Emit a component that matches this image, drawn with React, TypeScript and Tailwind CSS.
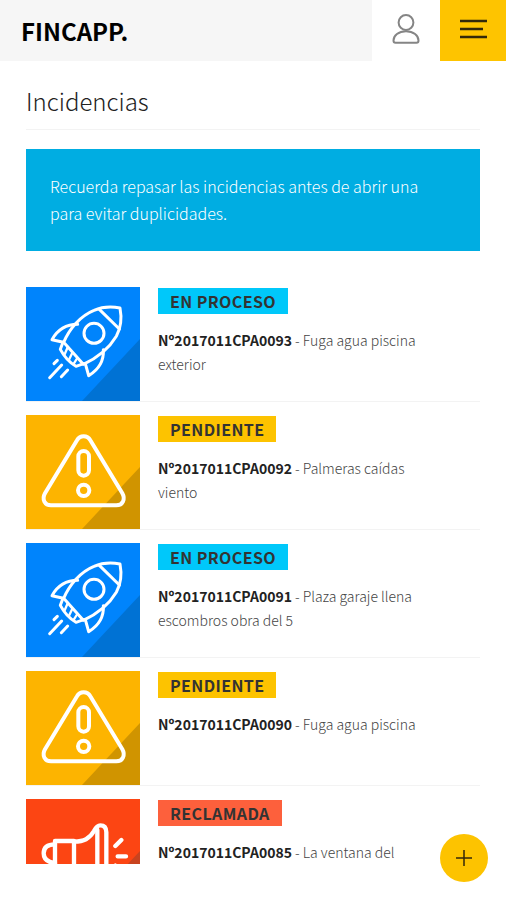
import type { ReactNode } from "react"

type Status = "proceso" | "pendiente" | "reclamada"

interface Incident {
    code: string
    text: string
    status: Status
}

const incidents: Incident[] = [
    { code: "Nº2017011CPA0093", text: "Fuga agua piscina exterior", status: "proceso" },
    { code: "Nº2017011CPA0092", text: "Palmeras caídas viento", status: "pendiente" },
    { code: "Nº2017011CPA0091", text: "Plaza garaje llena escombros obra del 5", status: "proceso" },
    { code: "Nº2017011CPA0090", text: "Fuga agua piscina", status: "pendiente" },
    { code: "Nº2017011CPA0085", text: "La ventana del", status: "reclamada" },
]

const RocketIcon = () => (
    <g strokeWidth="9">
        <path d="M131 190C148 150 180 111 222 94C245 84 275 82 300 87C306 118 301 150 289 172C268 207 230 238 190 256Z" />
        <path d="M238 91L298 150" />
        <circle cx="222" cy="163" r="30" />
        <path d="M173 136C138 136 114 150 96 182L130 190" />
        <path d="M250 212C252 246 236 272 206 290L196 254" />
        <path d="M129 190L121 211C132 232 148 250 168 262L191 254" />
        <path strokeWidth="7" d="M143 205L134 226M157 221L147 242M172 237L160 256" />
        <path d="M112 244L102 254M125 258L89 296M143 273L124 293" />
    </g>
)

const WarningIcon = () => (
    <g strokeWidth="12">
        <path d="M171 98C180 82 202 82 211 98L307 257C317 275 308 293 289 293H93C74 293 65 275 75 257Z" />
        <rect x="175" y="130" width="32" height="74" rx="16" />
        <circle cx="191" cy="248" r="17" />
    </g>
)

const MegaphoneIcon = () => (
    <g strokeWidth="13">
        <path d="M105 190C82 190 71 200 71 217C71 234 82 244 105 246" />
        <path d="M105 180H162V256H105Z" />
        <path d="M162 182C192 181 208 174 222 150C229 136 234 133 241 133C252 133 259 140 259 154V282C259 296 252 302 241 302C234 302 229 298 222 286C208 262 192 256 162 256" />
        <path d="M232 146V290" />
        <path d="M286 195L304 177M293 226H318M286 254L304 272" />
    </g>
)

const statusStyles: Record<Status, { label: string; badge: string; tile: string; corner: string; viewBox: string; icon: ReactNode }> = {
    proceso: {
        label: "EN PROCESO",
        badge: "bg-[#00c8fa]",
        tile: "bg-[#0084fc]",
        corner: "fill-[#0072d4]",
        viewBox: "18 24 342 342",
        icon: <RocketIcon />,
    },
    pendiente: {
        label: "PENDIENTE",
        badge: "bg-[#fdc300]",
        tile: "bg-[#fdb400]",
        corner: "fill-[#d09400]",
        viewBox: "18 22 342 342",
        icon: <WarningIcon />,
    },
    reclamada: {
        label: "RECLAMADA",
        badge: "bg-[#fd603c]",
        tile: "bg-[#fc4513]",
        corner: "fill-[#c8431f]",
        viewBox: "18 54 342 342",
        icon: <MegaphoneIcon />,
    },
}

const StatusTile = ({ status }: { status: Status }) => {
    const { tile, corner, viewBox, icon } = statusStyles[status]
    return (
        <div className={`grid size-[114px] shrink-0 ${tile}`}>
            <svg viewBox="0 0 114 114" className={`col-start-1 row-start-1 size-full ${corner}`} aria-hidden="true">
                <path d="M114 52V114H56Z" />
            </svg>
            <svg
                viewBox={viewBox}
                className="col-start-1 row-start-1 size-full fill-none stroke-white"
                strokeLinecap="round"
                strokeLinejoin="round"
                aria-hidden="true"
            >
                {icon}
            </svg>
        </div>
    )
}

const IncidentRow = ({ incident }: { incident: Incident }) => {
    const { label, badge } = statusStyles[incident.status]
    return (
        <li className="flex gap-[18px] border-b border-[#f3f3f3]">
            <StatusTile status={incident.status} />
            <div className="min-w-0 flex-1 pt-px pr-10">
                <span className={`inline-block px-3 text-base/[26px] font-bold tracking-wide text-[#333] align-top ${badge}`}>{label}</span>
                <p className="mt-3.5 text-sm/6 font-light text-[#444]">
                    <strong className="font-bold text-[#222]">{incident.code}</strong> - {incident.text}
                </p>
            </div>
        </li>
    )
}

const Header = () => (
    <header className="flex h-[61px] shrink-0">
        <div className="flex flex-1 items-center bg-[#f6f6f6] pl-[21px]">
            <a href="#" className="text-2xl font-bold text-black">FINCAPP.</a>
        </div>
        <button aria-label="Mi cuenta" className="flex w-[68px] items-center justify-center">
            <svg width="28" height="30" viewBox="0 0 28 30" className="-mt-1 fill-none stroke-[#858585]" strokeWidth="2" aria-hidden="true">
                <circle cx="14" cy="8.5" r="7.4" />
                <path d="M14 17.2C6.5 17.2 1.5 21.5 1.5 26.5C1.5 28 2.3 28.7 3.5 28.7H24.5C25.7 28.7 26.5 28 26.5 26.5C26.5 21.5 21.5 17.2 14 17.2Z" />
            </svg>
        </button>
        <button aria-label="Menú" className="flex w-[66px] items-center justify-center bg-[#fec400]">
            <svg width="28" height="20" viewBox="0 0 28 20" className="-mt-1 stroke-[#33290a]" strokeWidth="2.4" aria-hidden="true">
                <path d="M1 2H28M1 10H24M1 18H28" />
            </svg>
        </button>
    </header>
)

const App = () => {
    return (
        <div className="flex h-screen flex-col bg-white font-['Noto_Sans_CJK_SC','Noto_Sans',sans-serif]">
            <Header />
            <main className="flex min-h-0 flex-1 flex-col px-[26px] pb-9">
                <h1 className="border-b border-[#f3f3f3] pt-6 pb-3 text-2xl/[32px] font-light text-[#222]">Incidencias</h1>
                <p className="mt-[19px] bg-[#00ade2] py-6 pr-12 pl-6 text-base/[27px] font-light text-white">
                    Recuerda repasar las incidencias antes de abrir una para evitar duplicidades.
                </p>
                <ul className="mt-9 flex min-h-0 flex-1 flex-col gap-[13px] overflow-hidden">
                    {incidents.map((incident) => (
                        <IncidentRow key={incident.code} incident={incident} />
                    ))}
                </ul>
            </main>

            {/* Floating action button */}
            <button aria-label="Nueva incidencia" className="fixed right-[18px] bottom-[18px] flex size-12 items-center justify-center rounded-full bg-[#fdc300]">
                <svg width="16" height="16" viewBox="0 0 16 16" className="stroke-[#33290a]" strokeWidth="1.5" aria-hidden="true">
                    <path d="M8 0V16M0 8H16" />
                </svg>
            </button>
        </div>
    )
}

export default App
